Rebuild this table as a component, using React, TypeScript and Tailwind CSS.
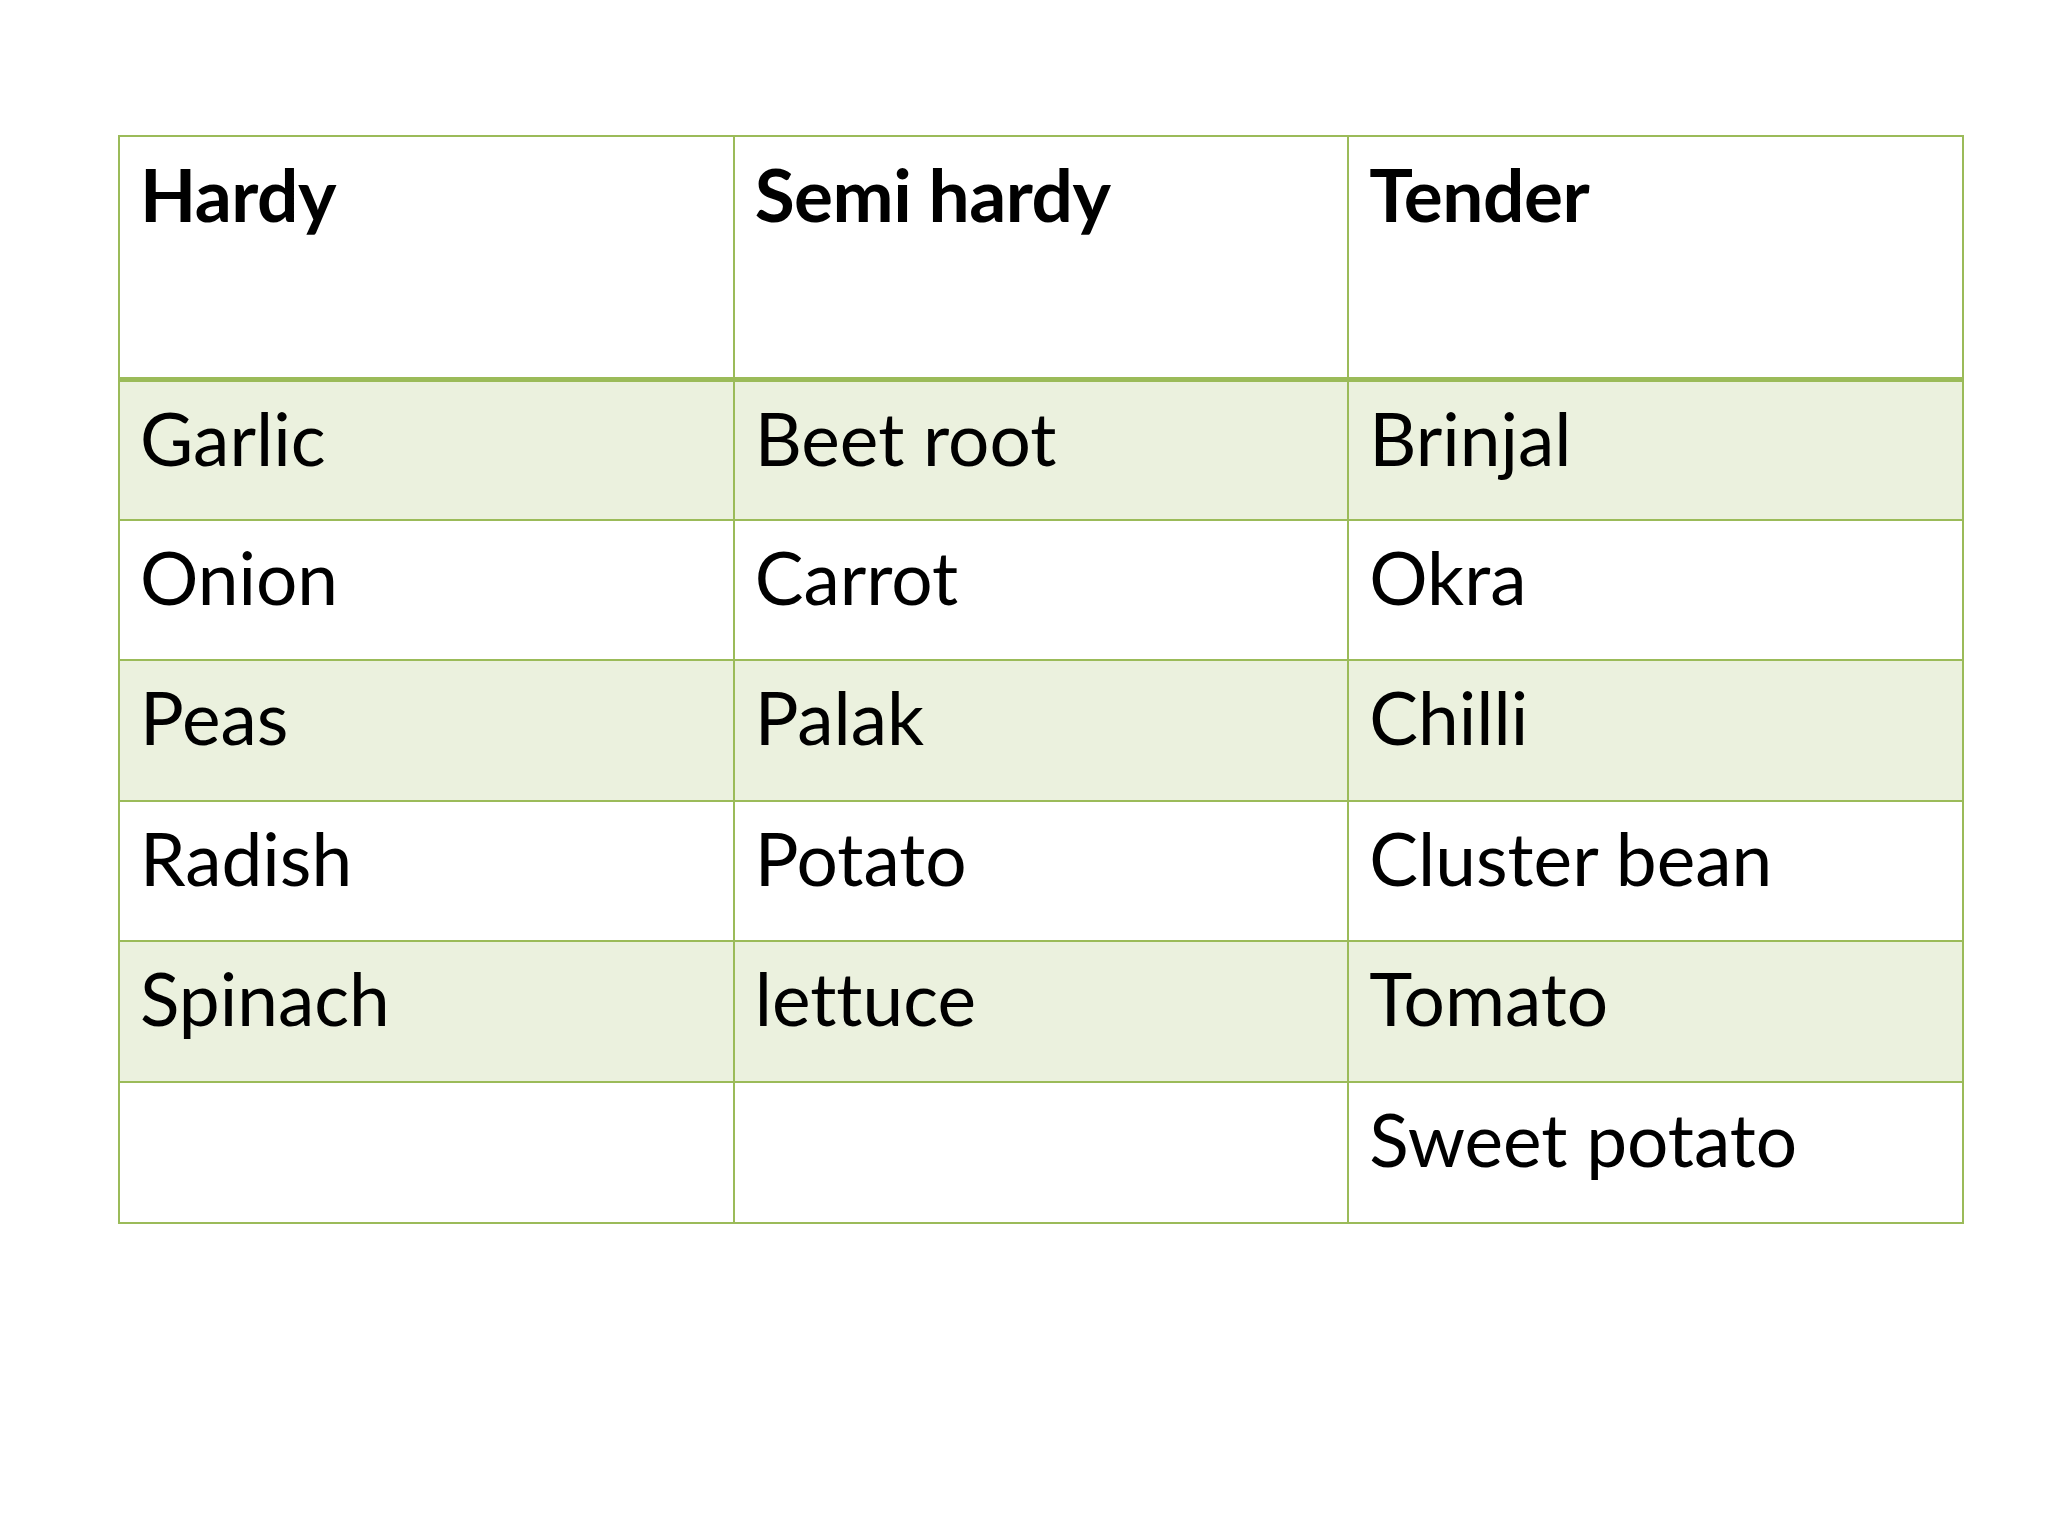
const HEADERS = ['Hardy', 'Semi hardy', 'Tender']

const ROWS: string[][] = [
  ['Garlic', 'Beet root', 'Brinjal'],
  ['Onion', 'Carrot', 'Okra'],
  ['Peas', 'Palak', 'Chilli'],
  ['Radish', 'Potato', 'Cluster bean'],
  ['Spinach', 'lettuce', 'Tomato'],
  ['', '', 'Sweet potato'],
]

export default function App() {
  return (
    <div className="min-h-[1536px] w-[2048px] bg-white pl-[118px] pt-[135px] font-['Lato',sans-serif] text-black [font-variant-ligatures:none]">
      <table className="w-[1846px] table-fixed border-collapse">
        <thead>
          <tr className="h-[243px] bg-white">
            {HEADERS.map((h) => (
              <th
                key={h}
                className="border-2 border-b-[5px] border-[#9bbb59] px-[20px] pt-[14px] text-left align-top text-[73px] font-bold leading-[1.2] tracking-[-0.5px]"
              >
                {h}
              </th>
            ))}
          </tr>
        </thead>
        <tbody>
          {ROWS.map((row, i) => (
            <tr
              key={i}
              className={i % 2 === 0 ? 'h-[140.6px] bg-[#ebf1de]' : 'h-[140.6px] bg-white'}
            >
              {row.map((cell, j) => (
                <td
                  key={j}
                  className="border-2 border-[#9bbb59] px-[20px] pt-[13px] align-top text-[73px] leading-[1.2]"
                >
                  {cell}
                </td>
              ))}
            </tr>
          ))}
        </tbody>
      </table>
    </div>
  )
}
